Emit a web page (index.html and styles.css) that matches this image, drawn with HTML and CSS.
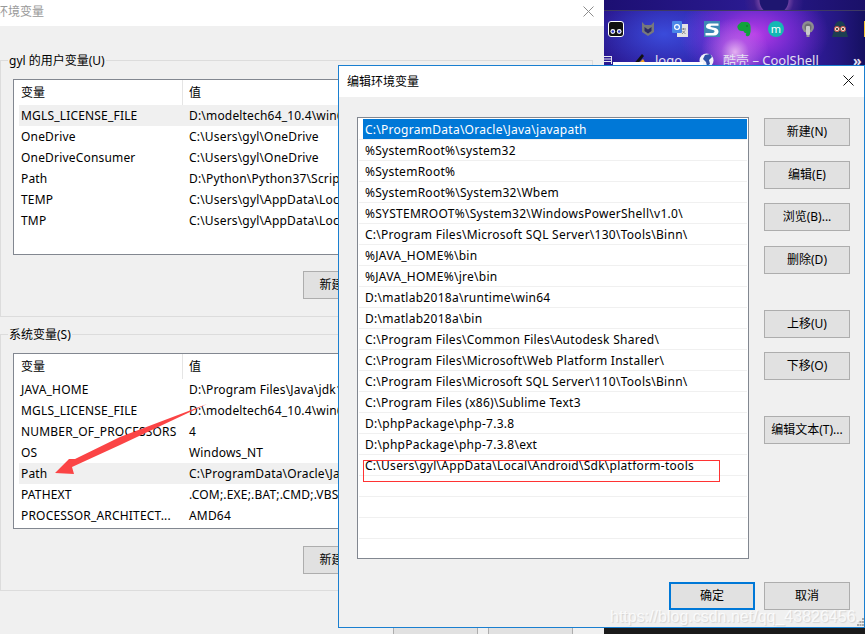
FILE: index.html
```html
<!DOCTYPE html>
<html lang="zh-CN">
<head>
    <meta charset="UTF-8">
    <title>编辑环境变量</title>
    <link rel="stylesheet" href="styles.css">
</head>
<body>
    <div class="window env-window">
        <div class="titlebar env-title">
            <span class="env-title-text">环境变量</span>
            <svg class="close-icon" width="11" height="11" viewBox="0 0 11 11"><path d="M0.5 0.5L10.5 10.5M10.5 0.5L0.5 10.5" stroke="#8c8c8c" fill="none"/></svg>
        </div>
        <div class="env-body">
            <div class="group">
                <span class="legend">gyl 的用户变量(U)</span>
                <div class="var-list">
                    <div class="var-row var-head"><span class="var-name">变量</span><span class="var-divider"></span><span class="var-value">值</span></div>
                    <div class="var-row var-active"><span class="var-name">MGLS_LICENSE_FILE</span><span class="var-value">D:\modeltech64_10.4\win64;D:\modeltech</span></div>
                    <div class="var-row"><span class="var-name">OneDrive</span><span class="var-value">C:\Users\gyl\OneDrive</span></div>
                    <div class="var-row"><span class="var-name">OneDriveConsumer</span><span class="var-value">C:\Users\gyl\OneDrive</span></div>
                    <div class="var-row"><span class="var-name">Path</span><span class="var-value">D:\Python\Python37\Scripts\;D:\Python</span></div>
                    <div class="var-row"><span class="var-name">TEMP</span><span class="var-value">C:\Users\gyl\AppData\Local\Temp</span></div>
                    <div class="var-row"><span class="var-name">TMP</span><span class="var-value">C:\Users\gyl\AppData\Local\Temp</span></div>
                </div>
                <div class="group-actions"><button class="btn btn-back">新建(W)...</button></div>
            </div>
            <div class="group group-system">
                <span class="legend">系统变量(S)</span>
                <div class="var-list">
                    <div class="var-row var-head"><span class="var-name">变量</span><span class="var-divider"></span><span class="var-value">值</span></div>
                    <div class="var-row"><span class="var-name">JAVA_HOME</span><span class="var-value">D:\Program Files\Java\jdk1.8.0</span></div>
                    <div class="var-row"><span class="var-name">MGLS_LICENSE_FILE</span><span class="var-value">D:\modeltech64_10.4\win64;D:\modeltech</span></div>
                    <div class="var-row"><span class="var-name">NUMBER_OF_PROCESSORS</span><span class="var-value">4</span></div>
                    <div class="var-row"><span class="var-name">OS</span><span class="var-value">Windows_NT</span></div>
                    <div class="var-row var-active"><span class="var-name">Path</span><span class="var-value">C:\ProgramData\Oracle\Java\javapath</span></div>
                    <div class="var-row"><span class="var-name">PATHEXT</span><span class="var-value">.COM;.EXE;.BAT;.CMD;.VBS;.VBE;.JS</span></div>
                    <div class="var-row"><span class="var-name">PROCESSOR_ARCHITECT...</span><span class="var-value">AMD64</span></div>
                </div>
                <div class="group-actions"><button class="btn btn-back">新建(W)...</button></div>
            </div>
            <div class="env-actions">
                <button class="btn btn-back">确定</button>
                <button class="btn btn-back">取消</button>
            </div>
        </div>
        <svg class="arrow" width="220" height="80" viewBox="0 0 220 80"><polygon points="207,4 120,37 75,59 69,59 55,73 74,74 72,67 120,45" fill="#fb4445"/></svg>
    </div>

    <div class="desktop">
        <div class="desk-strip"></div>
        <div class="icon-row">
            <svg class="ext-icon" viewBox="0 0 16 16"><rect x="0.5" y="0.5" width="15" height="15" rx="2.5" fill="#111" stroke="#fff"/><circle cx="4.8" cy="10.5" r="2.4" fill="#fff"/><circle cx="11.2" cy="10.5" r="2.4" fill="#fff"/><circle cx="4.8" cy="10.5" r="1.3" fill="#2c35c8"/><circle cx="11.2" cy="10.5" r="1.3" fill="#2c35c8"/></svg>
            <svg class="ext-icon" viewBox="0 0 16 16"><path d="M2 1L5 4H11L14 1V11L8 15L2 11Z" fill="#77787c"/><path d="M4.5 6L8 8.500L11.500 6V10L8 12.500L4.500 10Z" fill="#2b2a66"/></svg>
            <svg class="ext-icon" viewBox="0 0 16 16"><rect x="5" y="3" width="11" height="13" fill="#e3e3e3"/><rect x="0" y="0" width="10" height="12" rx="1" fill="#4a86e8"/><circle cx="5" cy="6" r="2.4" fill="none" stroke="#fff" stroke-width="1.2"/><path d="M9 8H14M11.500 7V9M10 13L13 9.500M10.500 10L13.500 13" stroke="#8a8a8a" fill="none"/></svg>
            <svg class="ext-icon" viewBox="0 0 16 16"><rect width="16" height="16" fill="#3d87b5"/><path d="M14.500 2.500H6C3 2.500 2 4 2 5.500C2 7.500 4 8 7 8.500C10 9 10.500 9.500 10.500 10.500C10.500 11.500 9 12 7.500 12H1.500V14.500H10C13 14.500 14.500 12.500 14.500 10.500C14.500 8 12 7 9 6.500C7 6.200 6.500 6 6.500 5.500C6.500 5 7 4.800 8 4.800H14.500Z" fill="#fff"/></svg>
            <svg class="ext-icon" viewBox="0 0 16 16"><path d="M3 3L5.500 1H10C13 1 14.500 3 14.500 6C14.500 8 15 10 14 13C13.500 15 12 15.500 10.500 15C9.500 14.500 9.500 13 10.500 12.500C9 12 8 11.500 7.500 10C5.500 10 3 10 2 8C1 6 1 4.500 3 3Z" fill="#11a23c"/><circle cx="11" cy="5" r="0.8" fill="#0a6a28"/></svg>
            <svg class="ext-icon" viewBox="0 0 16 16"><circle cx="8" cy="8" r="8" fill="#14b8b4"/><text class="ext-m" x="8" y="11.500" text-anchor="middle">m</text></svg>
            <svg class="ext-icon" viewBox="0 0 16 16"><circle cx="8" cy="6" r="6" fill="#8d8d90"/><circle cx="8" cy="6" r="3.500" fill="#6e6e72"/><rect x="6" y="5" width="4" height="9" rx="1" fill="#c9c9cb"/><rect x="6.500" y="14" width="3" height="2" fill="#9a9a9c"/></svg>
            <svg class="ext-icon" viewBox="0 0 16 16"><path d="M0 16L2 9C2 3 5 0 8 0C11 0 14 3 14 9L16 16Z" fill="#1d3f52"/><circle cx="5" cy="8" r="2.600" fill="#f0e0d0" stroke="#c8504a"/><circle cx="11" cy="8" r="2.600" fill="#f0e0d0" stroke="#c8504a"/><circle cx="5" cy="8" r="1" fill="#222"/><circle cx="11" cy="8" r="1" fill="#222"/></svg>
            <span class="ext-icon ext-yellow"></span>
        </div>
        <div class="bookmark-row">
            <svg class="bm-lines" width="8" height="8" viewBox="0 0 8 8"><path d="M0 0.500H8M0 3H8M0 5.500H8M7.500 0V8" stroke="#e6e6f0" fill="none"/></svg>
            <svg class="bm-pen" width="14" height="14" viewBox="0 0 14 14"><path d="M0 13L10 1L12 3L3 14Z" fill="#111"/><path d="M8 9L11 6L14 11L10 11Z" fill="#f0a020"/></svg>
            <span class="bm-text bm-logo">logo</span>
            <svg class="bm-globe" width="15" height="15" viewBox="0 0 15 15"><circle cx="7.500" cy="7.500" r="7" fill="#f2f2f8"/><path d="M6 2L11 1L13 4L10 7L11 11L8 13L7 9L4 6Z" fill="#2f4fa8"/></svg>
            <span class="bm-text bm-cool">酷壳 – CoolShell</span>
            <span class="bm-more">»</span>
        </div>
        <div class="desk-popup"></div>
    </div>

    <div class="window edit-window">
        <div class="titlebar edit-title">
            <span>编辑环境变量</span>
            <svg class="close-icon" width="11" height="11" viewBox="0 0 11 11"><path d="M0.5 0.5L10.5 10.5M10.5 0.5L0.5 10.5" stroke="#111" fill="none"/></svg>
        </div>
        <div class="edit-body">
            <div class="path-list">
                <div class="path-row path-selected"><span class="path-text">C:\ProgramData\Oracle\Java\javapath</span></div>
                <div class="path-row"><span class="path-text">%SystemRoot%\system32</span></div>
                <div class="path-row"><span class="path-text">%SystemRoot%</span></div>
                <div class="path-row"><span class="path-text">%SystemRoot%\System32\Wbem</span></div>
                <div class="path-row"><span class="path-text">%SYSTEMROOT%\System32\WindowsPowerShell\v1.0\</span></div>
                <div class="path-row"><span class="path-text">C:\Program Files\Microsoft SQL Server\130\Tools\Binn\</span></div>
                <div class="path-row"><span class="path-text">%JAVA_HOME%\bin</span></div>
                <div class="path-row"><span class="path-text">%JAVA_HOME%\jre\bin</span></div>
                <div class="path-row"><span class="path-text">D:\matlab2018a\runtime\win64</span></div>
                <div class="path-row"><span class="path-text">D:\matlab2018a\bin</span></div>
                <div class="path-row"><span class="path-text">C:\Program Files\Common Files\Autodesk Shared\</span></div>
                <div class="path-row"><span class="path-text">C:\Program Files\Microsoft\Web Platform Installer\</span></div>
                <div class="path-row"><span class="path-text">C:\Program Files\Microsoft SQL Server\110\Tools\Binn\</span></div>
                <div class="path-row"><span class="path-text">C:\Program Files (x86)\Sublime Text3</span></div>
                <div class="path-row"><span class="path-text">D:\phpPackage\php-7.3.8</span></div>
                <div class="path-row"><span class="path-text">D:\phpPackage\php-7.3.8\ext</span></div>
                <div class="path-row path-marked"><span class="path-text">C:\Users\gyl\AppData\Local\Android\Sdk\platform-tools</span><span class="red-box"></span></div>
                <div class="path-row"></div>
                <div class="path-row"></div>
                <div class="path-row"></div>
            </div>
            <div class="side-buttons">
                <div class="btn-stack">
                    <button class="btn">新建(N)</button>
                    <button class="btn">编辑(E)</button>
                    <button class="btn">浏览(B)...</button>
                    <button class="btn">删除(D)</button>
                </div>
                <div class="btn-stack">
                    <button class="btn">上移(U)</button>
                    <button class="btn">下移(O)</button>
                </div>
                <div class="btn-stack">
                    <button class="btn">编辑文本(T)...</button>
                </div>
            </div>
            <div class="edit-actions">
                <button class="btn btn-default">确定</button>
                <button class="btn">取消</button>
            </div>
        </div>
    </div>

    <div class="dark-corner"></div>
    <div class="watermark">https://blog.csdn.net/qq_43826456.</div>
    <svg class="grip" width="7" height="8" viewBox="0 0 7 8"><path d="M5 0h2v2H5zM2.500 3h2v2h-2zM5 3h2v2H5zM0 6h2v2H0zM2.500 6h2v2h-2zM5 6h2v2H5z" fill="#a8a8a8"/></svg>
</body>
</html>
```

FILE: styles.css
```css
* {
    box-sizing: border-box;
}

html, body {
    margin: 0;
    height: 100%;
    overflow: hidden;
}

body {
    position: relative;
    width: 865px;
    height: 634px;
    background: #f0f0f0;
    font-family: "Noto Sans", "Noto Sans CJK SC", sans-serif;
    font-size: 12px;
    color: #000;
}

.window {
    position: absolute;
    background: #f0f0f0;
}

.titlebar {
    display: flex;
    align-items: center;
    justify-content: space-between;
    background: #fff;
}

/* back window */
.env-window {
    left: 0;
    top: 0;
    width: 604px;
    height: 634px;
    overflow: hidden;
}

.env-title {
    height: 26px;
    padding: 0 10px 4px 0;
    color: #999;
}

.env-title-text {
    margin-left: -4px;
}

.env-body {
    padding-top: 34px;
}

.group {
    width: 593px;
    height: 257px;
    border: 1px solid #dcdcdc;
    padding: 0 12px;
}

.group-system {
    margin-top: 17px;
}

.legend {
    display: block;
    width: fit-content;
    height: 18px;
    margin: -9px 0 0 -5px;
    padding: 0 1px;
    background: #f0f0f0;
    line-height: 17px;
}

.var-list {
    width: 567px;
    height: 176px;
    margin-top: 9px;
    border: 1px solid #828790;
    background: #fff;
    padding: 0 0 0 5px;
    overflow: hidden;
}

.var-row {
    display: flex;
    height: 21px;
    line-height: 21px;
    letter-spacing: 0.18px;
    white-space: nowrap;
}

.var-head {
    height: 25px;
    line-height: 25px;
    letter-spacing: 0;
}

.var-active {
    background: #f0f0f0;
}

.var-name {
    width: 170px;
    padding-left: 2px;
    flex: none;
}

.var-head .var-name {
    width: 163px;
}

.var-divider {
    flex: none;
    width: 1px;
    margin-right: 6px;
    background: #e5e5e5;
}

.group-actions {
    margin-top: 16px;
    padding-left: 290px;
}

.group-system .group-actions {
    margin-top: 17px;
}

.env-actions {
    display: flex;
    justify-content: flex-end;
    gap: 10px;
    margin-top: 17px;
    padding-right: 31px;
}

.btn {
    display: block;
    width: 86px;
    height: 28px;
    padding: 0 0 2px;
    border: 1px solid #adadad;
    background: #e1e1e1;
    font: inherit;
    color: #000;
    white-space: nowrap;
}

.btn-back {
    width: 85px;
}

.btn-default {
    border: 2px solid #0078d7;
}

.arrow {
    position: absolute;
    left: 0;
    top: 400px;
}

/* desktop behind the windows */
.desktop {
    position: absolute;
    left: 604px;
    top: 0;
    width: 261px;
    height: 65px;
    overflow: hidden;
    background:
        radial-gradient(circle at 131px 52px, rgba(240, 190, 245, 0.9) 0, rgba(200, 110, 235, 0.55) 14px, rgba(170, 60, 230, 0) 34px),
        radial-gradient(ellipse 75px 50px at 150px 34px, rgba(190, 60, 235, 0.95) 0, rgba(150, 50, 225, 0.6) 50%, rgba(90, 40, 200, 0) 100%),
        radial-gradient(ellipse 70px 40px at 60px 34px, rgba(60, 80, 225, 0.9) 0, rgba(50, 60, 200, 0) 100%),
        linear-gradient(90deg, #2a1890 0, #3024b0 45%, #3a1eb0 70%, #241780 90%, #151060 100%);
}

.desk-strip {
    height: 11px;
    border-bottom: 1px solid #3e3a62;
    background:
        radial-gradient(circle at 170px 0, #1e1670 0, #1e1670 14px, #6a3fa0 15px, #3a1f8a 20px, rgba(40, 20, 120, 0) 30px),
        linear-gradient(90deg, #1c0f72, #2a1a90 55%, #1a1068);
}

.icon-row {
    display: flex;
    gap: 16px;
    margin-top: 10px;
    padding-left: 4px;
}

.ext-icon {
    display: block;
    flex: none;
    width: 16px;
    height: 16px;
}

.ext-m {
    font-size: 11px;
    fill: #fff;
}

.ext-yellow {
    background: #f2c230;
}

.bookmark-row {
    display: flex;
    align-items: center;
    height: 16px;
    margin-top: 15px;
    color: #e4e0f2;
    white-space: nowrap;
}

.bm-lines {
    flex: none;
}

.bm-pen {
    flex: none;
    margin-left: 20px;
}

.bm-text {
    font-size: 13px;
    line-height: 16px;
}

.bm-logo {
    width: 30px;
    margin-left: 9px;
}

.bm-globe {
    flex: none;
    margin-left: 14px;
}

.bm-cool {
    width: 100px;
    margin-left: 9px;
}

.bm-more {
    margin-left: 30px;
    font-size: 14px;
    font-weight: bold;
}

.desk-popup {
    position: absolute;
    left: 9px;
    top: 62px;
    width: 90px;
    height: 3px;
    background: #fff;
}

/* edit dialog */
.edit-window {
    left: 338px;
    top: 65px;
    width: 527px;
    height: 563px;
    border: 1px solid #1a7fd0;
}

.edit-title {
    height: 31px;
    padding: 0 10px 2px 8px;
}

.edit-body {
    display: grid;
    grid-template-columns: 392px 86px;
    column-gap: 15px;
    padding: 20px 0 0 18px;
}

.path-list {
    height: 442px;
    border: 1px solid #828790;
    background: #fff;
    padding-top: 1px;
    overflow: hidden;
}

.path-row {
    position: relative;
    height: 21px;
    margin: 0 1px;
    padding-left: 4px;
    border-bottom: 1px solid #f0f0f0;
    line-height: 21px;
    letter-spacing: 0.27px;
    white-space: nowrap;
}

.path-text {
    display: block;
    height: 20px;
    padding-left: 2px;
}

.path-selected .path-text {
    background: #0078d7;
    color: #fff;
}

.red-box {
    position: absolute;
    left: 4px;
    top: 5px;
    width: 357px;
    height: 22px;
    border: 1px solid #f33;
}

.side-buttons {
    display: flex;
    flex-direction: column;
    gap: 36px;
    margin-top: 1px;
}

.btn-stack {
    display: flex;
    flex-direction: column;
    gap: 14.5px;
}

.edit-actions {
    grid-column: 1 / 3;
    display: flex;
    justify-content: flex-end;
    gap: 9px;
    margin-top: 23px;
}

.dark-corner {
    position: absolute;
    left: 604px;
    top: 628px;
    width: 261px;
    height: 6px;
    background: #1a1a1a;
}

.watermark {
    position: absolute;
    left: 610px;
    top: 605px;
    font-family: "Liberation Sans", sans-serif;
    font-size: 16px;
    line-height: 24px;
    color: rgba(255, 255, 255, 0.8);
    text-shadow: 1px 1px 1px rgba(0, 0, 0, 0.12);
    white-space: nowrap;
}

.grip {
    position: absolute;
    left: 857px;
    top: 618px;
}
```
